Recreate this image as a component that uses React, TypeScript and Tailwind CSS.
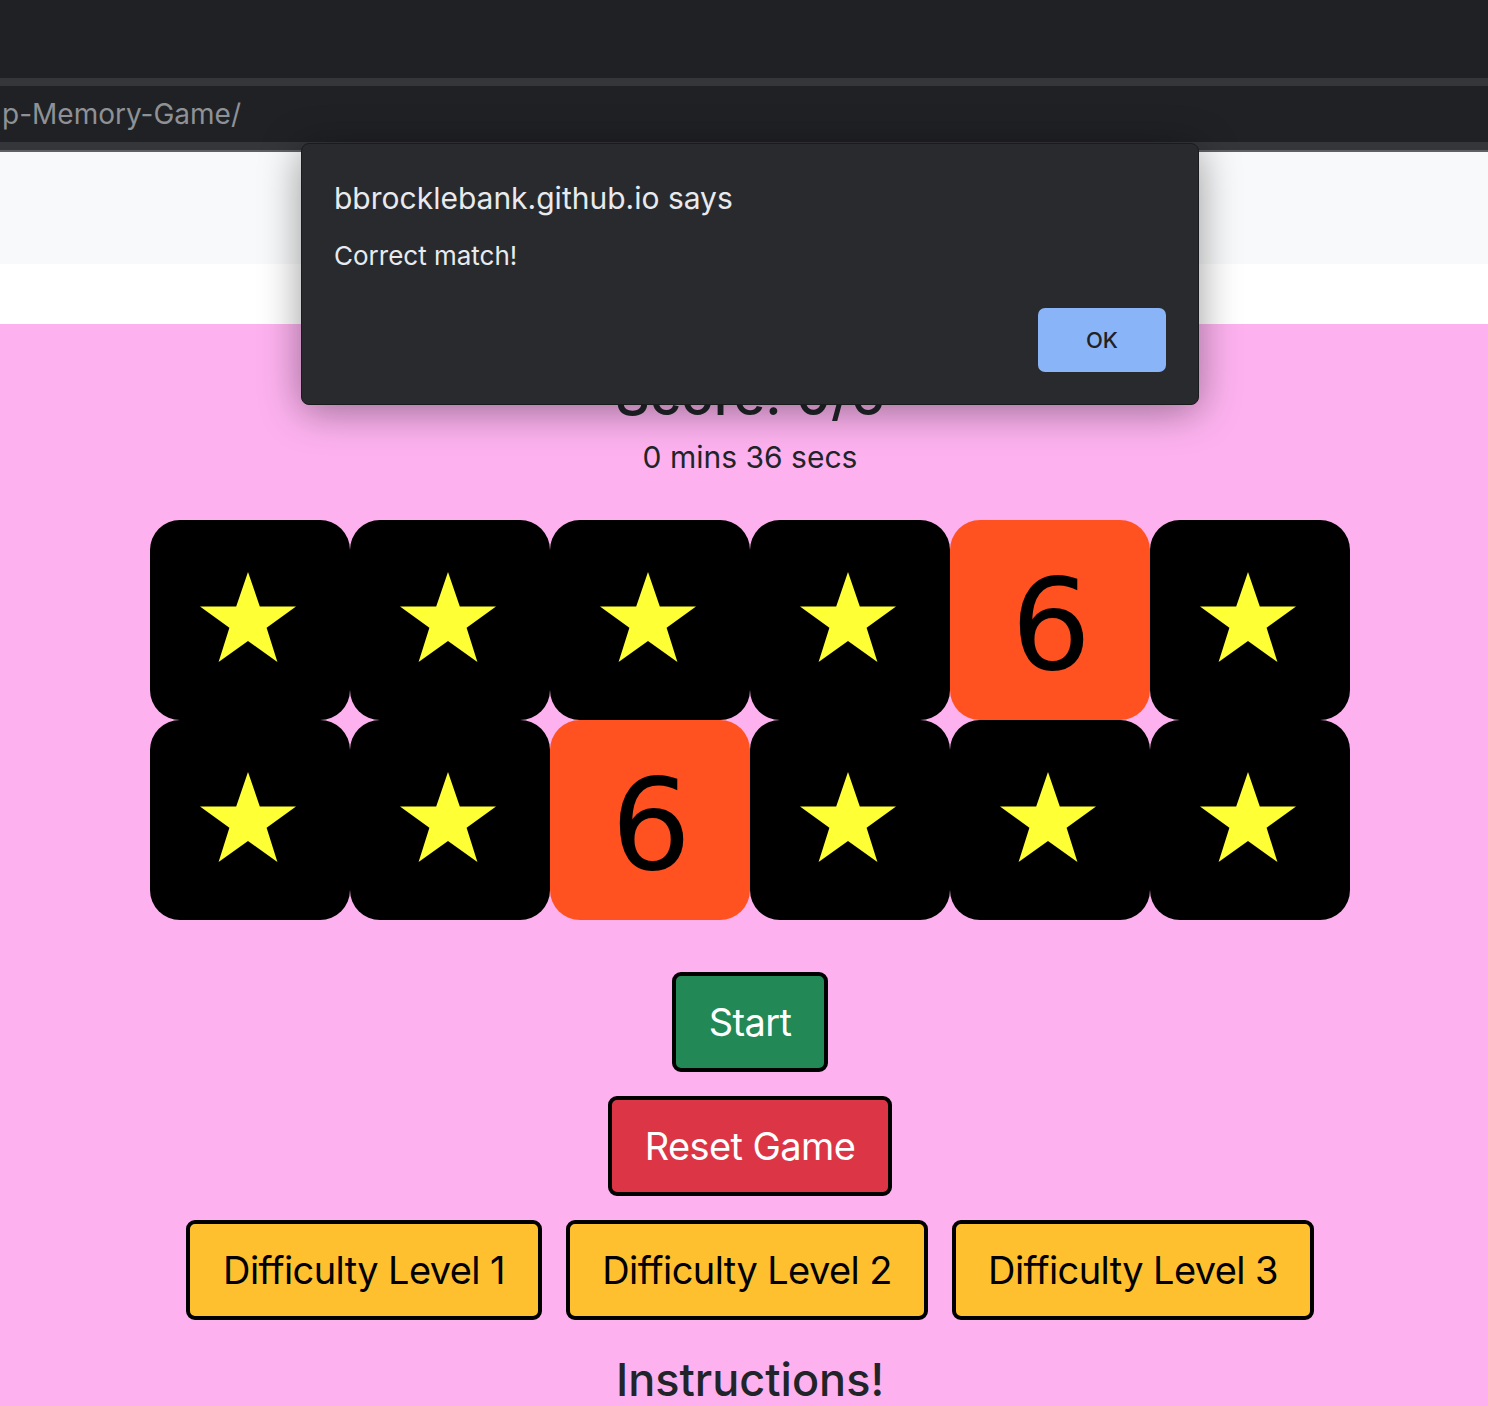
import { ReactNode } from "react"

const font = { fontFamily: "Inter, 'Noto Sans', sans-serif" }

// 12 tiles, two of them face up
const tiles = [false, false, false, false, true, false, false, false, true, false, false, false]

const Star = () => (
  <svg width="100" height="95" viewBox="0 0 100 95" className="mt-[-6px] ml-[-4px]">
    <polygon
      points="50,2 61.8,36.4 98,36.4 68.6,57.8 79.4,92 50,71 20.6,92 31.4,57.8 2,36.4 38.2,36.4"
      fill="#ffff35"
    />
  </svg>
)

const Tile = ({ open }: { open: boolean }) => (
  <div
    className={`h-[200px] w-[200px] rounded-[30px] flex items-center justify-center ${
      open ? "bg-[#ff5220]" : "bg-black"
    }`}
  >
    {open ? (
      <span className="text-[126px] leading-none text-black mt-[12px] ml-[2px]" style={{ fontFamily: "'DejaVu Sans', sans-serif" }}>
        6
      </span>
    ) : (
      <Star />
    )}
  </div>
)

const Btn = ({ children, className }: { children: ReactNode; className: string }) => (
  <button
    className={`h-[100px] border-4 border-black rounded-[9px] text-[38px] tracking-[-0.6px] flex items-center justify-center ${className}`}
  >
    {children}
  </button>
)

export default function App() {
  return (
    <div className="relative w-[1488px] min-h-[1406px] bg-[#fdb2ef] overflow-hidden" style={font}>
      {/* browser chrome */}
      <div className="h-[78px] bg-[#202124]" />
      <div className="h-[8px] bg-[#35363a]" />
      <div className="h-[56px] bg-[#202124] flex items-center">
        <span className="ml-[2px] text-[28px] text-[#8e9196]">p-Memory-Game/</span>
      </div>
      <div className="h-[8px] bg-[#35363a]" />
      <div className="h-[2px] bg-[#5f6064]" />

      {/* page navbar + spacer */}
      <div className="h-[112px] bg-[#f8f9fa]" />
      <div className="h-[60px] bg-white" />

      {/* game */}
      <main className="pl-[12px] pt-[39px] pb-[20px] flex flex-col items-center text-[#212529]">
        <h1 className="text-[54px] leading-[65px] font-medium">Score: 0/6</h1>
        <p className="text-[30px] leading-[36px] mt-[11px]">0 mins 36 secs</p>

        <div className="grid grid-cols-6 mt-[45px]">
          {tiles.map((open, i) => (
            <Tile key={i} open={open} />
          ))}
        </div>

        <Btn className="mt-[52px] w-[156px] bg-[#218856] text-white">Start</Btn>
        <Btn className="mt-[24px] w-[284px] bg-[#dc3545] text-white">Reset Game</Btn>

        <div className="mt-[24px] flex gap-[24px]">
          <Btn className="w-[356px] bg-[#ffc02f] text-black">Difficulty Level 1</Btn>
          <Btn className="w-[362px] bg-[#ffc02f] text-black">Difficulty Level 2</Btn>
          <Btn className="w-[362px] bg-[#ffc02f] text-black">Difficulty Level 3</Btn>
        </div>

        <h2 className="mt-[32px] text-[45px] leading-[56px] font-medium">Instructions!</h2>
      </main>

      {/* alert dialog */}
      <div className="absolute left-[301px] top-[143px] w-[898px] h-[262px] bg-[#292a2d] rounded-[8px] border border-[#1a1b1d] shadow-[0_6px_40px_rgba(0,0,0,0.4)] px-[32px] pt-[35px] flex flex-col">
        <div className="text-[30px] leading-[38px] text-[#e8eaed]">bbrocklebank.github.io says</div>
        <div className="mt-[23px] text-[26px] leading-[32px] text-[#e8eaed]">Correct match!</div>
        <div className="flex justify-end mt-[36px]">
          <button className="w-[128px] h-[64px] rounded-[7px] bg-[#8ab4f8] text-[22px] text-[#202124] font-medium">
            OK
          </button>
        </div>
      </div>
    </div>
  )
}
